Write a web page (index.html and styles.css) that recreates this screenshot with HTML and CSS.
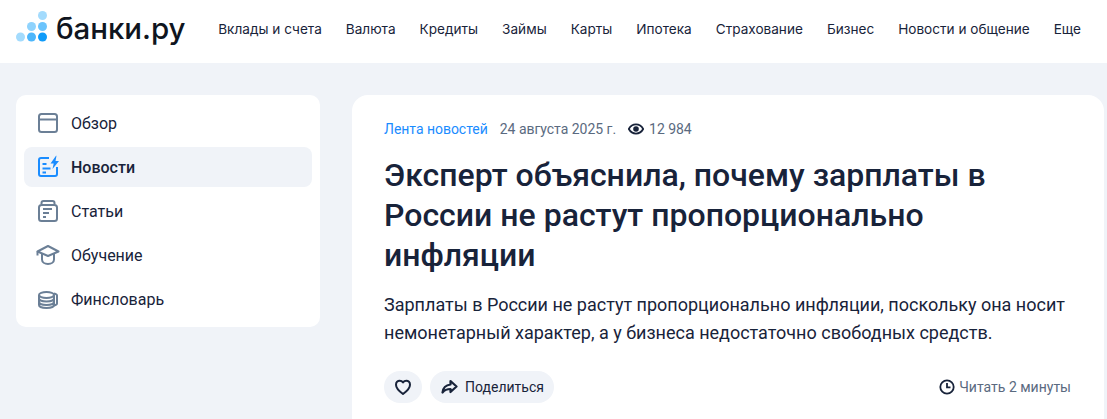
FILE: index.html
```html
<!DOCTYPE html>
<html lang="ru">
<head>
<meta charset="utf-8">
<title>Банки.ру</title>
<link rel="stylesheet" href="styles.css">
</head>
<body>
<header class="header">
  <a class="logo">
    <svg class="logo-mark" width="32" height="32" viewBox="0 0 32 32">
      <circle cx="26.500" cy="4.500" r="4.500" fill="#a3dbfd"/>
      <circle cx="15.500" cy="15.500" r="4.500" fill="#8fd3fd"/>
      <circle cx="26.500" cy="15.500" r="4.500" fill="#6cc4fc"/>
      <circle cx="4.500" cy="26" r="4.500" fill="#a3dbfd"/>
      <circle cx="15.500" cy="26" r="4.500" fill="#4db6fb"/>
      <circle cx="26.500" cy="26" r="4.500" fill="#0f9bf9"/>
    </svg>
    <span class="logo-text">банки.ру</span>
  </a>
  <nav class="topnav">
    <a>Вклады и счета</a><a>Валюта</a><a>Кредиты</a><a>Займы</a><a>Карты</a><a>Ипотека</a><a>Страхование</a><a>Бизнес</a><a>Новости и общение</a><a>Еще</a>
  </nav>
</header>
<main class="layout">
  <aside class="sidebar">
    <a class="side-item">
      <svg class="ico" viewBox="0 0 24 24" fill="none" stroke="#6b7f96" stroke-width="2"><rect x="3" y="3" width="18" height="18" rx="2.500"/><path d="M3 8.500h18"/></svg>
      <span>Обзор</span>
    </a>
    <a class="side-item active">
      <svg class="ico" viewBox="0 0 24 24" fill="none" stroke="#1a8cff" stroke-width="2"><path d="M13 3H5a2 2 0 0 0-2 2v14a2 2 0 0 0 2 2h14a2 2 0 0 0 2-2v-7"/><path d="M6.500 9h4M6.500 13.500h8M6.500 17.500h3.500"/><path d="M20 .8 14.500 8.500h3.200L16.500 14l6.500-8h-3.500l1-5.200z" fill="#1a8cff" stroke="none"/></svg>
      <span>Новости</span>
    </a>
    <a class="side-item">
      <svg class="ico" viewBox="0 0 24 24" fill="none" stroke="#6b7f96" stroke-width="2"><path d="M5.500 5V4a2 2 0 0 1 2-2h9a2 2 0 0 1 2 2v1"/><rect x="3" y="6" width="18" height="16" rx="2.500"/><path d="M7 10h9M7 14h6M7 18h3"/></svg>
      <span>Статьи</span>
    </a>
    <a class="side-item">
      <svg class="ico" viewBox="0 0 24 24" fill="none" stroke="#6b7f96" stroke-width="2" stroke-linejoin="round"><path d="M12 3 22.500 8.500 12 13 1.500 8.500z"/><path d="M6 11v5.500c0 2.800 2.700 4.500 6 4.500s6-1.700 6-4.500V11"/><path d="M1.500 8.500v4"/></svg>
      <span>Обучение</span>
    </a>
    <a class="side-item">
      <svg class="ico" viewBox="0 0 24 24" fill="none" stroke="#6b7f96" stroke-width="2"><ellipse cx="10.500" cy="8" rx="7.500" ry="3"/><path d="M3 8v10c0 1.700 3.400 3 7.500 3s7.500-1.300 7.500-3V8"/><path d="M3 11.500c0 1.700 3.400 3 7.500 3s7.500-1.300 7.500-3M3 15c0 1.700 3.400 3 7.500 3s7.500-1.300 7.500-3"/><path d="M18 6.500c2 .4 3 1.200 3 2v8c0 .8-1 1.600-3 2"/></svg>
      <span>Финсловарь</span>
    </a>
  </aside>
  <article class="article">
    <div class="meta">
      <a class="meta-link">Лента новостей</a>
      <span>24 августа 2025 г.</span>
      <span class="views">
        <svg width="16" height="16" viewBox="0 0 16 16"><path d="M.8 8C2.500 4.900 5 3.400 8 3.400s5.500 1.500 7.200 4.600c-1.700 3.100-4.200 4.600-7.200 4.600S2.500 11.100.8 8z" fill="none" stroke="#18233a" stroke-width="1.800"/><circle cx="8" cy="8" r="2.800" fill="#18233a"/></svg>
        12 984
      </span>
    </div>
    <h1>Эксперт объяснила, почему зарплаты в России не растут пропорционально инфляции</h1>
    <p class="lead">Зарплаты в России не растут пропорционально инфляции, поскольку она носит немонетарный характер, а у бизнеса недостаточно свободных средств.</p>
    <div class="actions">
      <div class="buttons">
        <button class="btn btn-round" aria-label="Нравится">
          <svg width="20" height="20" viewBox="0 0 20 20"><path d="M10 17C5 13.300 3 10.800 3 7.700 3 5.300 4.700 3.700 6.700 3.700c1.400 0 2.500.6 3.300 1.700.8-1.100 1.900-1.700 3.300-1.700 2 0 3.700 1.600 3.700 4 0 3.100-2 5.600-7 9.300z" fill="none" stroke="#18233a" stroke-width="2" stroke-linejoin="round"/></svg>
        </button>
        <button class="btn btn-share">
          <svg width="18" height="18" viewBox="0 0 18 18"><path d="M10.500 3 16.500 8.500l-6 5.500v-3C7 11 4.500 12 2.500 14.500 3 10 6 7 10.500 6.500z" fill="none" stroke="#18233a" stroke-width="2.200" stroke-linejoin="round"/></svg>
          Поделиться
        </button>
      </div>
      <span class="read">
        <svg width="16" height="16" viewBox="0 0 16 16" fill="none" stroke="#18233a" stroke-width="1.800"><circle cx="8" cy="8" r="6.700"/><path d="M8 4v4.300h3.500"/></svg>
        Читать 2 минуты
      </span>
    </div>
  </article>
</main>
</body>
</html>
```
FILE: styles.css
```css
* { box-sizing: border-box; }
html, body { margin: 0; height: 100%; overflow: hidden; }
body { background: #f0f3f8; font-family: Roboto, "Noto Sans", sans-serif; color: #18233a; }
.header { height: 63px; background: #fff; display: flex; align-items: center; padding: 0 26px 0 16px; justify-content: space-between; }
.logo { display: flex; align-items: center; gap: 8px; }
.logo-mark { display: block; margin-top: -9px; }
.logo-text { font-family: Inter, sans-serif; font-weight: 500; font-size: 29.500px; letter-spacing: -0.05px; color: #0f1520; line-height: 32px; margin-top: -7px; }
.topnav { display: flex; gap: 24px; font-family: Inter, sans-serif; font-size: 13.600px; color: #18233a; margin-top: -6px; }
.layout { display: flex; gap: 32px; padding: 32px 0 0 16px; align-items: flex-start; }
.sidebar { width: 304px; height: 232px; background: #fff; border-radius: 10px; padding: 8px; display: flex; flex-direction: column; gap: 4px; flex: none; }
.side-item { height: 40px; border-radius: 8px; display: flex; align-items: center; gap: 11px; padding-left: 12px; font-size: 16px; color: #18233a; }
.side-item.active { background: #f0f3f8; font-weight: 500; }
.ico { width: 24px; height: 24px; flex: none; display: block; }
.article { width: 752px; height: 330px; background: #fff; border-radius: 16px 16px 0 0; padding: 24px 33px 0 32px; flex: none; }
.meta { display: flex; align-items: center; gap: 12px; font-size: 14px; letter-spacing: -0.03px; line-height: 20px; color: #5a6a80; }
.meta-link { color: #1a8cff; }
.views { display: flex; align-items: center; gap: 5px; }
h1 { margin: 16px 0 0; font-size: 32px; line-height: 40px; font-weight: 500; color: #18233a; }
.lead { margin: 16px 0 0; font-size: 18px; line-height: 28px; color: #18233a; }
.actions { display: flex; justify-content: space-between; align-items: center; margin-top: 24px; }
.buttons { display: flex; gap: 8px; }
.btn { border: 0; height: 32px; border-radius: 16px; background: #f0f3f8; display: flex; align-items: center; justify-content: center; font: 14px Roboto, sans-serif; color: #18233a; padding: 0; }
.btn-round { width: 38px; }
.btn-share { width: 124px; gap: 7px; }
.read { display: flex; align-items: center; gap: 4px; font-size: 14px; color: #5a6a80; }
```
